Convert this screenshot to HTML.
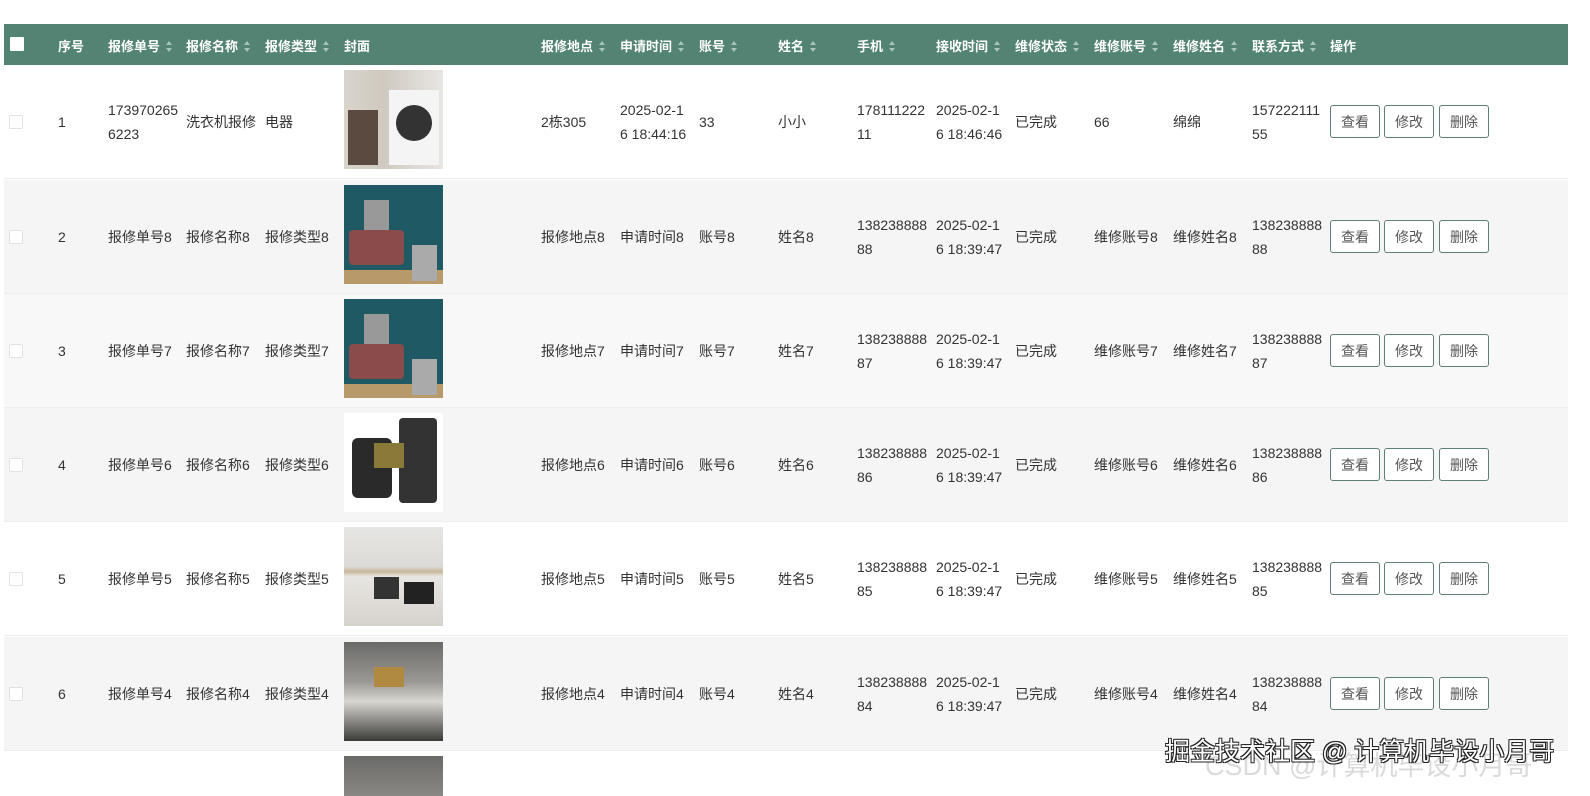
<!DOCTYPE html>
<html><head><meta charset="utf-8">
<style>
*{margin:0;padding:0;box-sizing:border-box}
html,body{width:1590px;height:796px;overflow:hidden}
body{background:#fff;font-family:"Liberation Sans","Noto Sans CJK SC",sans-serif;color:#333;font-size:14px;position:relative}
.hd{position:absolute;left:4px;top:24px;width:1564px;height:41px;background:#528373;color:#fff;font-weight:bold;font-size:13px}
.hd span{position:absolute;top:12px;white-space:nowrap}
.s{display:inline-block;width:7px;height:11px;margin-left:6px;vertical-align:-1px;position:relative}
.s:before,.s:after{content:"";position:absolute;left:0;border-left:3.5px solid transparent;border-right:3.5px solid transparent}
.s:before{top:0;border-bottom:4px solid #a9c4b9}
.s:after{bottom:0;border-top:4px solid #a9c4b9}
.hcb{position:absolute;left:6px;top:13px;width:14px;height:14px;background:#fff;border-radius:1px}
.r{position:absolute;left:4px;width:1564px;height:114px;border-bottom:1px solid #eee}
.r.g{background:#f5f5f5}
.c{position:absolute;top:0;height:100%;display:flex;align-items:center;width:71px;line-height:24px;word-break:break-all}
.cb{position:absolute;left:5px;top:50px;width:14px;height:14px;border:1px solid #e2e2e2;background:#fff;border-radius:2px}
.img{position:absolute;left:340px;top:5px;width:99px;height:99px}
.b{position:absolute;top:40px;height:33px;width:50px;border:1px solid #5f7f74;border-radius:3px;background:#fff;color:#555;font-size:14px;display:flex;align-items:center;justify-content:center}
.wm{position:absolute;left:1165px;top:732px;font-size:25px;color:#fff;text-shadow:1px 1px 0 #222,-1px -1px 0 #222,1px -1px 0 #222,-1px 1px 0 #222;white-space:nowrap}
.wm2{position:absolute;left:1205px;top:748px;font-size:27px;line-height:36px;color:rgba(150,150,150,.35);white-space:nowrap}
</style></head><body>
<div class="hd">
<div class="hcb"></div>
<span style="left:54px">序号</span>
<span style="left:104px">报修单号<i class="s"></i></span>
<span style="left:182px">报修名称<i class="s"></i></span>
<span style="left:261px">报修类型<i class="s"></i></span>
<span style="left:340px">封面</span>
<span style="left:537px">报修地点<i class="s"></i></span>
<span style="left:616px">申请时间<i class="s"></i></span>
<span style="left:695px">账号<i class="s"></i></span>
<span style="left:774px">姓名<i class="s"></i></span>
<span style="left:853px">手机<i class="s"></i></span>
<span style="left:932px">接收时间<i class="s"></i></span>
<span style="left:1011px">维修状态<i class="s"></i></span>
<span style="left:1090px">维修账号<i class="s"></i></span>
<span style="left:1169px">维修姓名<i class="s"></i></span>
<span style="left:1248px">联系方式<i class="s"></i></span>
<span style="left:1326px">操作</span>
</div>

<div class="r" style="top:65px">
<div class="cb"></div><div class="c" style="left:54px">1</div>
<div class="c" style="left:104px">1739702656223</div><div class="c" style="left:182px;width:78px">洗衣机报修</div><div class="c" style="left:261px">电器</div>
<div class="img" style="background:linear-gradient(90deg,#d9d4cc 0,#cfc9c0 40%,#e8e6e3 100%)"><div style="position:absolute;left:4px;top:40px;width:30px;height:55px;background:#5a4a40"></div><div style="position:absolute;left:45px;top:20px;width:50px;height:75px;background:#f4f4f4"></div><div style="position:absolute;left:52px;top:35px;width:36px;height:36px;border-radius:50%;background:#333"></div></div>
<div class="c" style="left:537px">2栋305</div><div class="c" style="left:616px">2025-02-16 18:44:16</div><div class="c" style="left:695px">33</div><div class="c" style="left:774px">小小</div><div class="c" style="left:853px">17811122211</div><div class="c" style="left:932px">2025-02-16 18:46:46</div><div class="c" style="left:1011px">已完成</div><div class="c" style="left:1090px">66</div><div class="c" style="left:1169px">绵绵</div><div class="c" style="left:1248px">15722211155</div>
<div class="b" style="left:1326px">查看</div><div class="b" style="left:1380px">修改</div><div class="b" style="left:1435px">删除</div>
</div>

<div class="r g" style="top:180px">
<div class="cb"></div><div class="c" style="left:54px">2</div>
<div class="c" style="left:104px;width:78px">报修单号8</div><div class="c" style="left:182px;width:78px">报修名称8</div><div class="c" style="left:261px;width:78px">报修类型8</div>
<div class="img" style="background:#1f5a64"><div style="position:absolute;left:20px;top:15px;width:25px;height:30px;background:#999"></div><div style="position:absolute;left:5px;top:45px;width:55px;height:35px;background:#8a4c4a;border-radius:4px"></div><div style="position:absolute;left:0;top:85px;width:99px;height:14px;background:#b89a6a"></div><div style="position:absolute;left:68px;top:60px;width:25px;height:36px;background:#aaa"></div></div>
<div class="c" style="left:537px;width:78px">报修地点8</div><div class="c" style="left:616px;width:78px">申请时间8</div><div class="c" style="left:695px">账号8</div><div class="c" style="left:774px">姓名8</div><div class="c" style="left:853px">13823888888</div><div class="c" style="left:932px">2025-02-16 18:39:47</div><div class="c" style="left:1011px">已完成</div><div class="c" style="left:1090px;width:78px">维修账号8</div><div class="c" style="left:1169px;width:78px">维修姓名8</div><div class="c" style="left:1248px">13823888888</div>
<div class="b" style="left:1326px">查看</div><div class="b" style="left:1380px">修改</div><div class="b" style="left:1435px">删除</div>
</div>

<div class="r" style="top:294px;background:#f8f8f8">
<div class="cb"></div><div class="c" style="left:54px">3</div>
<div class="c" style="left:104px;width:78px">报修单号7</div><div class="c" style="left:182px;width:78px">报修名称7</div><div class="c" style="left:261px;width:78px">报修类型7</div>
<div class="img" style="background:#1f5a64"><div style="position:absolute;left:20px;top:15px;width:25px;height:30px;background:#999"></div><div style="position:absolute;left:5px;top:45px;width:55px;height:35px;background:#8a4c4a;border-radius:4px"></div><div style="position:absolute;left:0;top:85px;width:99px;height:14px;background:#b89a6a"></div><div style="position:absolute;left:68px;top:60px;width:25px;height:36px;background:#aaa"></div></div>
<div class="c" style="left:537px;width:78px">报修地点7</div><div class="c" style="left:616px;width:78px">申请时间7</div><div class="c" style="left:695px">账号7</div><div class="c" style="left:774px">姓名7</div><div class="c" style="left:853px">13823888887</div><div class="c" style="left:932px">2025-02-16 18:39:47</div><div class="c" style="left:1011px">已完成</div><div class="c" style="left:1090px;width:78px">维修账号7</div><div class="c" style="left:1169px;width:78px">维修姓名7</div><div class="c" style="left:1248px">13823888887</div>
<div class="b" style="left:1326px">查看</div><div class="b" style="left:1380px">修改</div><div class="b" style="left:1435px">删除</div>
</div>

<div class="r g" style="top:408px">
<div class="cb"></div><div class="c" style="left:54px">4</div>
<div class="c" style="left:104px;width:78px">报修单号6</div><div class="c" style="left:182px;width:78px">报修名称6</div><div class="c" style="left:261px;width:78px">报修类型6</div>
<div class="img" style="background:#fff"><div style="position:absolute;left:8px;top:25px;width:40px;height:60px;background:#2a2a2a;border-radius:6px"></div><div style="position:absolute;left:55px;top:5px;width:38px;height:85px;background:#333;border-radius:4px"></div><div style="position:absolute;left:30px;top:30px;width:30px;height:25px;background:#8a7a3a"></div></div>
<div class="c" style="left:537px;width:78px">报修地点6</div><div class="c" style="left:616px;width:78px">申请时间6</div><div class="c" style="left:695px">账号6</div><div class="c" style="left:774px">姓名6</div><div class="c" style="left:853px">13823888886</div><div class="c" style="left:932px">2025-02-16 18:39:47</div><div class="c" style="left:1011px">已完成</div><div class="c" style="left:1090px;width:78px">维修账号6</div><div class="c" style="left:1169px;width:78px">维修姓名6</div><div class="c" style="left:1248px">13823888886</div>
<div class="b" style="left:1326px">查看</div><div class="b" style="left:1380px">修改</div><div class="b" style="left:1435px">删除</div>
</div>

<div class="r" style="top:522px">
<div class="cb"></div><div class="c" style="left:54px">5</div>
<div class="c" style="left:104px;width:78px">报修单号5</div><div class="c" style="left:182px;width:78px">报修名称5</div><div class="c" style="left:261px;width:78px">报修类型5</div>
<div class="img" style="background:linear-gradient(180deg,#e6e6e4 0,#dcdad6 40%,#c8b89c 45%,#e8e6e2 50%,#d6d2cc 100%)"><div style="position:absolute;left:30px;top:50px;width:25px;height:22px;background:#333"></div><div style="position:absolute;left:60px;top:55px;width:30px;height:22px;background:#222"></div></div>
<div class="c" style="left:537px;width:78px">报修地点5</div><div class="c" style="left:616px;width:78px">申请时间5</div><div class="c" style="left:695px">账号5</div><div class="c" style="left:774px">姓名5</div><div class="c" style="left:853px">13823888885</div><div class="c" style="left:932px">2025-02-16 18:39:47</div><div class="c" style="left:1011px">已完成</div><div class="c" style="left:1090px;width:78px">维修账号5</div><div class="c" style="left:1169px;width:78px">维修姓名5</div><div class="c" style="left:1248px">13823888885</div>
<div class="b" style="left:1326px">查看</div><div class="b" style="left:1380px">修改</div><div class="b" style="left:1435px">删除</div>
</div>

<div class="r g" style="top:637px">
<div class="cb"></div><div class="c" style="left:54px">6</div>
<div class="c" style="left:104px;width:78px">报修单号4</div><div class="c" style="left:182px;width:78px">报修名称4</div><div class="c" style="left:261px;width:78px">报修类型4</div>
<div class="img" style="background:linear-gradient(180deg,#6a6a68 0,#9a9894 40%,#d8d6d0 60%,#3a3a38 100%)"><div style="position:absolute;left:30px;top:25px;width:30px;height:20px;background:#b08a40"></div></div>
<div class="c" style="left:537px;width:78px">报修地点4</div><div class="c" style="left:616px;width:78px">申请时间4</div><div class="c" style="left:695px">账号4</div><div class="c" style="left:774px">姓名4</div><div class="c" style="left:853px">13823888884</div><div class="c" style="left:932px">2025-02-16 18:39:47</div><div class="c" style="left:1011px">已完成</div><div class="c" style="left:1090px;width:78px">维修账号4</div><div class="c" style="left:1169px;width:78px">维修姓名4</div><div class="c" style="left:1248px">13823888884</div>
<div class="b" style="left:1326px">查看</div><div class="b" style="left:1380px">修改</div><div class="b" style="left:1435px">删除</div>
</div>

<div class="r" style="top:751px;height:45px;border:none;overflow:hidden">
<div class="img" style="height:40px;background:linear-gradient(180deg,#6a6a68 0,#8a8884 100%)"></div>
</div>

<div class="wm2">CSDN @计算机毕设小月哥</div>
<div class="wm">掘金技术社区 @ 计算机毕设小月哥</div>
</body></html>
